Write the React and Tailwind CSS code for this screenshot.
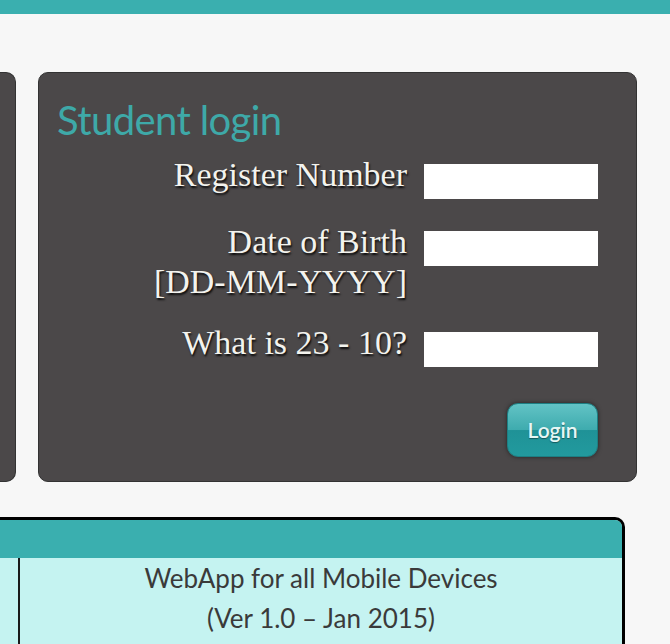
export default function App() {
  const label = 'pt-[2px] text-[34px] leading-[40px] text-[#f3f3ee] text-right [text-shadow:1px_2px_2px_rgba(0,0,0,0.85)]'
  return (
    <div className="w-[670px] h-[644px] overflow-hidden bg-[#f7f7f7] [font-family:'Liberation_Serif',serif]">
      <div className="h-[14px] bg-[#3aafaf]" />

      <div className="mt-[58px] flex h-[410px] gap-[22px]">
        <div className="w-[16px] rounded-r-[10px] border border-l-0 border-[#333] bg-[#4b4849]" />
        <div className="w-[599px] rounded-[10px] border border-[#333] bg-[#4b4849] pl-[18px]">
          <h1 className="mt-[17px] h-[63px] text-[40px] leading-[60px] tracking-[-0.6px] text-[#3ea9a8] [font-family:Lato,sans-serif]">
            Student login
          </h1>

          <div className="flex flex-col">
            <div className="flex gap-[17px]">
              <div className={`w-[350px] ${label}`}>Register Number</div>
              <div className="mt-[11px] h-[35px] w-[174px] bg-white" />
            </div>
            <div className="mt-[21px] flex gap-[17px]">
              <div className={`w-[350px] ${label}`}>
                Date of Birth
                <br />
                [DD-MM-YYYY]
              </div>
              <div className="mt-[11px] h-[35px] w-[174px] bg-white" />
            </div>
            <div className="mt-[19px] flex gap-[17px]">
              <div className={`w-[350px] ${label}`}>What is 23 - 10?</div>
              <div className="mt-[11px] h-[35px] w-[174px] bg-white" />
            </div>
          </div>

          <div className="mt-[36px] flex w-[541px] justify-end">
            <button className="h-[54px] w-[91px] rounded-[11px] border border-[#1d7f83] bg-[linear-gradient(to_bottom,#62c3c5_0%,#3eabae_50%,#1f9297_51%,#229a9e_100%)] text-[21px] font-semibold text-[#e6f7f6] shadow-[0_0_4px_rgba(0,0,0,0.5)] [font-family:Lato,sans-serif] [text-shadow:0_1px_1px_rgba(0,0,0,0.4)]">
              Login
            </button>
          </div>
        </div>
      </div>

      <div className="mt-[35px] h-[200px] w-[625px] overflow-hidden rounded-tr-[10px] border-t-[3px] border-r-[3px] border-black bg-[#c5f3f1]">
        <div className="h-[38px] bg-[#3aafaf]" />
        <div className="flex h-full">
          <div className="w-[20px] border-r-2 border-[#1a1a1a]" />
          <div className="flex-1 text-center text-[26px] leading-[40px] text-[#3a3a3a] [font-family:Lato,sans-serif]">
            <p>WebApp for all Mobile Devices</p>
            <p>(Ver 1.0 – Jan 2015)</p>
          </div>
        </div>
      </div>
    </div>
  )
}
